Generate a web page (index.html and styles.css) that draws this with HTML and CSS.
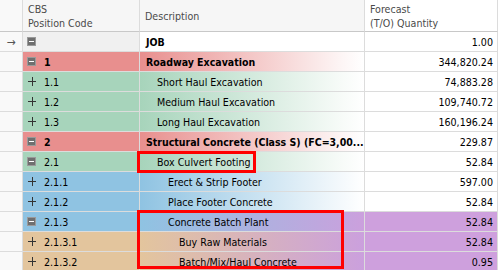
FILE: index.html
```html
<!DOCTYPE html>
<html lang="en">
<head>
    <meta charset="UTF-8">
    <title>CBS Forecast</title>
    <link rel="stylesheet" href="styles.css">
</head>
<body>
    <div class="grid">
        <div class="row head">
            <div class="cell sel"></div>
            <div class="cell code">CBS<br>Position Code</div>
            <div class="cell desc">Description</div>
            <div class="cell qty">Forecast<br>(T/O) Quantity</div>
        </div>

        <div class="row job">
            <div class="cell sel">&rarr;</div>
            <div class="cell code"><span class="tog minus"></span></div>
            <div class="cell desc lvl0"><b>JOB</b></div>
            <div class="cell qty">1.00</div>
        </div>

        <div class="row red">
            <div class="cell sel"></div>
            <div class="cell code"><span class="tog minus"></span><b>1</b></div>
            <div class="cell desc lvl1"><b>Roadway Excavation</b></div>
            <div class="cell qty">344,820.24</div>
        </div>
        <div class="row green">
            <div class="cell sel"></div>
            <div class="cell code"><span class="tog plus"></span>1.1</div>
            <div class="cell desc lvl2">Short Haul Excavation</div>
            <div class="cell qty">74,883.28</div>
        </div>
        <div class="row green">
            <div class="cell sel"></div>
            <div class="cell code"><span class="tog plus"></span>1.2</div>
            <div class="cell desc lvl2">Medium Haul Excavation</div>
            <div class="cell qty">109,740.72</div>
        </div>
        <div class="row green">
            <div class="cell sel"></div>
            <div class="cell code"><span class="tog plus"></span>1.3</div>
            <div class="cell desc lvl2">Long Haul Excavation</div>
            <div class="cell qty">160,196.24</div>
        </div>

        <div class="row red">
            <div class="cell sel"></div>
            <div class="cell code"><span class="tog minus"></span><b>2</b></div>
            <div class="cell desc lvl1"><b>Structural Concrete (Class S) (FC=3,00...</b></div>
            <div class="cell qty">229.87</div>
        </div>
        <div class="row green">
            <div class="cell sel"></div>
            <div class="cell code"><span class="tog minus"></span>2.1</div>
            <div class="cell desc lvl2">Box Culvert Footing</div>
            <div class="cell qty">52.84</div>
        </div>
        <div class="row blue">
            <div class="cell sel"></div>
            <div class="cell code"><span class="tog plus"></span>2.1.1</div>
            <div class="cell desc lvl3">Erect &amp; Strip Footer</div>
            <div class="cell qty">597.00</div>
        </div>
        <div class="row blue">
            <div class="cell sel"></div>
            <div class="cell code"><span class="tog plus"></span>2.1.2</div>
            <div class="cell desc lvl3">Place Footer Concrete</div>
            <div class="cell qty">52.84</div>
        </div>
        <div class="row blue batch">
            <div class="cell sel"></div>
            <div class="cell code"><span class="tog minus"></span>2.1.3</div>
            <div class="cell desc lvl3">Concrete Batch Plant</div>
            <div class="cell qty">52.84</div>
        </div>
        <div class="row tan batch">
            <div class="cell sel"></div>
            <div class="cell code"><span class="tog plus"></span>2.1.3.1</div>
            <div class="cell desc lvl4">Buy Raw Materials</div>
            <div class="cell qty">52.84</div>
        </div>
        <div class="row tan batch">
            <div class="cell sel"></div>
            <div class="cell code"><span class="tog plus"></span>2.1.3.2</div>
            <div class="cell desc lvl4">Batch/Mix/Haul Concrete</div>
            <div class="cell qty">0.95</div>
        </div>

        <!-- highlight frames -->
        <div class="mark mark-footing"></div>
        <div class="mark mark-batch"></div>
    </div>
</body>
</html>
```

FILE: styles.css
```css
/* CBS grid */
body {
    margin: 0;
    background-color: #ffffff;
    font-family: Tahoma, "DejaVu Sans Condensed", "DejaVu Sans", sans-serif;
    font-size: 10.6px;
    color: #000;
    overflow: hidden;
}

b {
    font-size: 10.5px;
}

.grid {
    position: relative;
    width: 498px;
}

.row {
    display: grid;
    grid-template-columns: 23px 117px 225px 133px;
    height: 20px;
}

.cell {
    box-sizing: border-box;
    border-right: 1px solid #dcdcdc;
    border-bottom: 1px solid #dcdcdc;
    display: flex;
    align-items: center;
    white-space: nowrap;
    overflow: hidden;
}

.head {
    height: 32px;
    background-color: #f6f6f6;
    color: #4a4a4a;
}

.head .cell {
    border-bottom-color: #c8c8c8;
    line-height: 14px;
    padding-left: 5px;
}

.head .sel {
    padding-left: 0;
}

.head .qty {
    justify-content: flex-start;
    padding-right: 0;
}

.sel {
    background-color: #f9f9f9;
    color: #555;
    justify-content: center;
    font-size: 12px;
}

.code {
    padding-left: 4px;
}

.desc {
    padding-right: 4px;
}

.qty {
    justify-content: flex-end;
    padding-right: 4px;
    background-color: #ffffff;
}

.lvl0, .lvl1 { padding-left: 6px; }
.lvl2 { padding-left: 17px; }
.lvl3 { padding-left: 28px; }
.lvl4 { padding-left: 39px; }

/* expand / collapse toggles */
.tog {
    width: 9px;
    height: 9px;
    margin-right: 8px;
    flex: none;
    position: relative;
}

.minus {
    box-sizing: border-box;
    background-color: #6f6f6f;
    border: 1px solid #9a9a9a;
}

.minus::after {
    content: "";
    position: absolute;
    left: 1px;
    right: 1px;
    top: 3px;
    height: 1px;
    background-color: #ffffff;
}

.plus::before,
.plus::after {
    content: "";
    position: absolute;
    background-color: #333;
}

.plus::before {
    left: 1px;
    right: 0;
    top: 4px;
    height: 1px;
}

.plus::after {
    left: 5px;
    top: 0;
    bottom: 0;
    width: 1px;
}

/* row colours */
.job .code { background-color: #f0f0f0; }
.job .desc { background-color: #ffffff; }

.red .code { background-color: #e88f8e; }
.red .desc { background: linear-gradient(to right, #e88f8e, #fdf5f5 90%, #ffffff); }

.green .code { background-color: #a7d4bb; }
.green .desc { background: linear-gradient(to right, #a7d4bb, #f7fbf8 90%, #ffffff); }

.blue .code { background-color: #8fc3e2; }
.blue .desc { background: linear-gradient(to right, #8fc3e2, #f4f9fc 90%, #ffffff); }

.tan .code { background-color: #e3c59d; }

.batch .qty { background-color: #cea0dd; }
.blue.batch .desc { background: linear-gradient(to right, #8fc3e2, #cba0dd); }
.tan.batch .desc { background: linear-gradient(to right, #e3c59d, #cba0dd); }

/* red frames over the grid */
.mark {
    position: absolute;
    box-sizing: border-box;
    border: 3px solid #ff0000;
}

.mark-footing {
    left: 137px;
    top: 151px;
    width: 119px;
    height: 22px;
}

.mark-batch {
    left: 137px;
    top: 210px;
    width: 207px;
    height: 59px;
}
```
